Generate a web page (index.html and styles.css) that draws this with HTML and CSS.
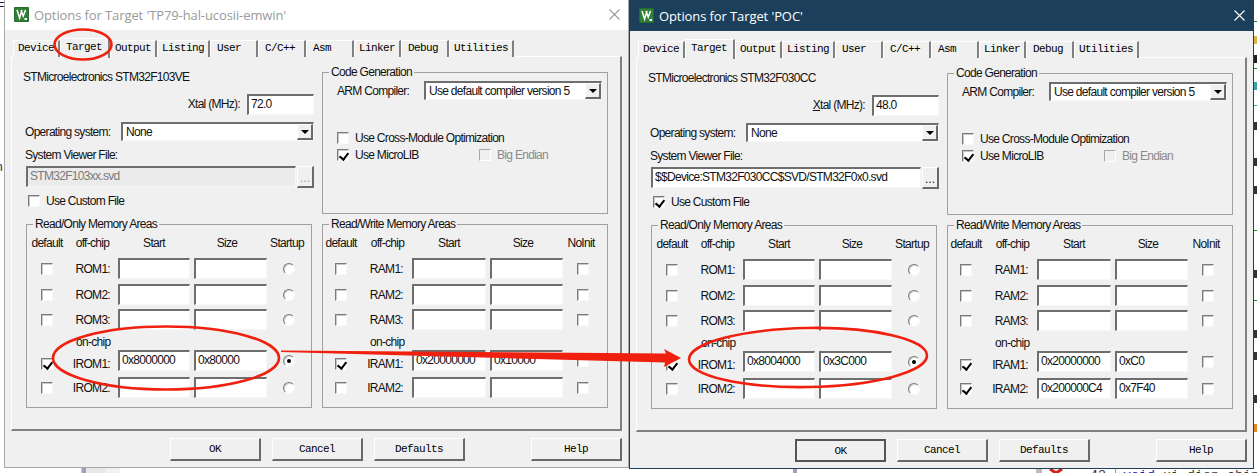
FILE: index.html
```html
<!DOCTYPE html>
<html lang="en">
<head>
<meta charset="utf-8">
<title>Options for Target</title>
<link rel="stylesheet" href="styles.css">
</head>
<body>
<div class="desktop">
  <span class="bg-f">F</span>
  <span class="bg-n">n</span>
  <svg class="bg-marks" width="1257" height="473" viewBox="0 0 1257 473">
    <rect x="81" y="467" width="1" height="6" fill="#c8c8c8"/>
    <rect x="82" y="467" width="4" height="6" fill="#a79cc0"/>
    <rect x="86" y="467" width="20" height="6" fill="#e8e8e8"/>
    <rect x="106" y="467" width="14" height="6" fill="#f2f2f2"/>
    <rect x="793" y="467" width="4" height="6" fill="#a79cc0"/>
    <rect x="1036" y="467" width="6" height="6" fill="#bdbdbd"/>
    <path d="M1050 469l6 4M1062 469l-6 4" stroke="#d8201a" stroke-width="3"/>
    <rect x="1115" y="467" width="1" height="6" fill="#999"/>
    <rect x="1254" y="21" width="3" height="1" fill="#1d8a2c"/>
    <rect x="1254" y="36" width="3" height="8" fill="#e3b04a"/>
    <rect x="1254" y="55" width="3" height="8" fill="#222"/>
    <rect x="1254" y="68" width="3" height="1" fill="#1d8a2c"/>
    <rect x="1254" y="82" width="3" height="8" fill="#3aa2a8"/>
    <rect x="1254" y="105" width="3" height="1" fill="#3aa2a8"/>
    <rect x="1254" y="122" width="3" height="8" fill="#333"/>
    <rect x="1254" y="158" width="3" height="8" fill="#333"/>
    <rect x="1254" y="186" width="3" height="8" fill="#333"/>
    <rect x="1254" y="230" width="3" height="1" fill="#1d8a2c"/>
    <rect x="1254" y="270" width="3" height="8" fill="#333"/>
    <rect x="1254" y="300" width="3" height="1" fill="#1d8a2c"/>
    <rect x="1254" y="330" width="3" height="8" fill="#333"/>
    <rect x="1254" y="352" width="3" height="8" fill="#333"/>
    <rect x="1254" y="395" width="3" height="8" fill="#333"/>
    <rect x="1254" y="424" width="3" height="8" fill="#e3862a"/>
  </svg>
  <span class="bg-lineno">43</span>
  <span class="bg-code"><b>void</b> ui_disp_chip</span>

  <section class="window window-inactive">
    <header class="titlebar">
      <svg class="app-icon" width="15" height="15" viewBox="0 0 15 15"><rect width="15" height="15" rx="1" fill="#256b2c"/><rect x="1" y="1" width="13" height="13" fill="#2f7f36"/><path d="M3 3l2.6 8L8 3M7 3l2.2 6L11.5 3" fill="none" stroke="#fff" stroke-width="1.5"/><path d="M10.5 11h2.5v2h-2.5z" fill="#fff"/></svg>
      <h1 class="title">Options for Target 'TP79-hal-ucosii-emwin'</h1>
      <svg class="close" width="11" height="11" viewBox="0 0 11 11"><path d="M.5.5l10 10M10.5.5l-10 10" fill="none" stroke="currentColor" stroke-width="1.1"/></svg>
    </header>
    <div class="dialog">
      <nav class="tabs">
        <span class="tab">Device</span><span class="tab tab-on">Target</span><span class="tab">Output</span><span class="tab">Listing</span><span class="tab">User</span><span class="tab">C/C++</span><span class="tab">Asm</span><span class="tab">Linker</span><span class="tab">Debug</span><span class="tab">Utilities</span>
      </nav>
      <div class="pane">
        <div class="col-device">
          <p class="device">STMicroelectronics STM32F103VE</p>
          <div class="xtal"><span>Xtal (MHz):</span><div class="field xtal-field">72.0</div></div>
          <div class="os"><span class="os-label">Operating system:</span><div class="field select">None<i class="arrow"></i></div></div>
          <p class="svf-label">System Viewer File:</p>
          <div class="svd"><div class="field svd-field field-off">STM32F103xx.svd</div><div class="dots dots-off">...</div></div>
          <label class="chk custom"><i class="cb"></i>Use Custom File</label>
        </div>
        <fieldset class="group codegen">
          <legend>Code Generation</legend>
          <div class="arm"><span class="arm-label">ARM Compiler:</span><div class="field select arm-select">Use default compiler version 5<i class="arrow"></i></div></div>
          <div class="chk opt-1"><i class="cb"></i>Use Cross-Module Optimization</div>
          <div class="opt-2"><div class="chk micro"><i class="cb on"></i>Use MicroLIB</div><div class="chk chk-off"><i class="cb"></i>Big Endian</div></div>
        </fieldset>
        <fieldset class="group mem-ro">
          <legend>Read/Only Memory Areas</legend>
          <div class="mem mem-grid-ro">
            <span class="hd">default</span><span class="hd">off-chip</span><span class="hd">Start</span><span class="hd hd-size">Size</span><span class="hd hd-last">Startup</span>
            <i class="cb"></i><span class="nm">ROM1:</span><div class="field"></div><div class="field"></div><i class="rd"></i>
            <i class="cb"></i><span class="nm">ROM2:</span><div class="field"></div><div class="field"></div><i class="rd"></i>
            <i class="cb"></i><span class="nm">ROM3:</span><div class="field"></div><div class="field"></div><i class="rd"></i>
            <span class="onchip">on-chip</span>
            <i class="cb on low"></i><span class="nm low">IROM1:</span><div class="field">0x8000000</div><div class="field">0x80000</div><i class="rd on"></i>
            <i class="cb"></i><span class="nm">IROM2:</span><div class="field"></div><div class="field"></div><i class="rd"></i>
          </div>
        </fieldset>
        <fieldset class="group mem-rw">
          <legend>Read/Write Memory Areas</legend>
          <div class="mem mem-grid-rw">
            <span class="hd">default</span><span class="hd hd-off">off-chip</span><span class="hd">Start</span><span class="hd hd-size">Size</span><span class="hd hd-last">NoInit</span>
            <i class="cb"></i><span class="nm">RAM1:</span><div class="field"></div><div class="field"></div><i class="cb"></i>
            <i class="cb"></i><span class="nm">RAM2:</span><div class="field"></div><div class="field"></div><i class="cb"></i>
            <i class="cb"></i><span class="nm">RAM3:</span><div class="field"></div><div class="field"></div><i class="cb"></i>
            <span class="onchip">on-chip</span>
            <i class="cb on low"></i><span class="nm low">IRAM1:</span><div class="field">0x20000000</div><div class="field">0x10000</div><i class="cb"></i>
            <i class="cb"></i><span class="nm">IRAM2:</span><div class="field"></div><div class="field"></div><i class="cb"></i>
          </div>
        </fieldset>
      </div>
      <footer class="buttons">
        <span class="btn">OK</span><span class="btn">Cancel</span><span class="btn">Defaults</span><span class="btn btn-help">Help</span>
      </footer>
    </div>
  </section>

  <section class="window window-active">
    <header class="titlebar">
      <svg class="app-icon" width="15" height="15" viewBox="0 0 15 15"><rect width="15" height="15" rx="1" fill="#256b2c"/><rect x="1" y="1" width="13" height="13" fill="#2f7f36"/><path d="M3 3l2.6 8L8 3M7 3l2.2 6L11.5 3" fill="none" stroke="#fff" stroke-width="1.5"/><path d="M10.5 11h2.5v2h-2.5z" fill="#fff"/></svg>
      <h1 class="title">Options for Target 'POC'</h1>
      <svg class="close" width="11" height="11" viewBox="0 0 11 11"><path d="M.5.5l10 10M10.5.5l-10 10" fill="none" stroke="currentColor" stroke-width="1.1"/></svg>
    </header>
    <div class="dialog">
      <nav class="tabs">
        <span class="tab">Device</span><span class="tab tab-on">Target</span><span class="tab">Output</span><span class="tab">Listing</span><span class="tab">User</span><span class="tab">C/C++</span><span class="tab">Asm</span><span class="tab">Linker</span><span class="tab">Debug</span><span class="tab">Utilities</span>
      </nav>
      <div class="pane">
        <div class="col-device">
          <p class="device">STMicroelectronics STM32F030CC</p>
          <div class="xtal"><span><u>X</u>tal (MHz):</span><div class="field xtal-field">48.0</div></div>
          <div class="os"><span class="os-label">Operating system:</span><div class="field select">None<i class="arrow"></i></div></div>
          <p class="svf-label">System Viewer File:</p>
          <div class="svd"><div class="field svd-field">$$Device:STM32F030CC$SVD/STM32F0x0.svd</div><div class="dots">...</div></div>
          <label class="chk custom"><i class="cb on"></i>Use Custom File</label>
        </div>
        <fieldset class="group codegen">
          <legend>Code Generation</legend>
          <div class="arm"><span class="arm-label">ARM Compiler:</span><div class="field select arm-select">Use default compiler version 5<i class="arrow"></i></div></div>
          <div class="chk opt-1"><i class="cb"></i>Use Cross-Module Optimization</div>
          <div class="opt-2"><div class="chk micro"><i class="cb on"></i>Use MicroLIB</div><div class="chk chk-off"><i class="cb"></i>Big Endian</div></div>
        </fieldset>
        <fieldset class="group mem-ro">
          <legend>Read/Only Memory Areas</legend>
          <div class="mem mem-grid-ro">
            <span class="hd">default</span><span class="hd">off-chip</span><span class="hd">Start</span><span class="hd hd-size">Size</span><span class="hd hd-last">Startup</span>
            <i class="cb"></i><span class="nm">ROM1:</span><div class="field"></div><div class="field"></div><i class="rd"></i>
            <i class="cb"></i><span class="nm">ROM2:</span><div class="field"></div><div class="field"></div><i class="rd"></i>
            <i class="cb"></i><span class="nm">ROM3:</span><div class="field"></div><div class="field"></div><i class="rd"></i>
            <span class="onchip">on-chip</span>
            <i class="cb on low"></i><span class="nm low">IROM1:</span><div class="field">0x8004000</div><div class="field">0x3C000</div><i class="rd on"></i>
            <i class="cb"></i><span class="nm">IROM2:</span><div class="field"></div><div class="field"></div><i class="rd"></i>
          </div>
        </fieldset>
        <fieldset class="group mem-rw">
          <legend>Read/Write Memory Areas</legend>
          <div class="mem mem-grid-rw">
            <span class="hd">default</span><span class="hd hd-off">off-chip</span><span class="hd">Start</span><span class="hd hd-size">Size</span><span class="hd hd-last">NoInit</span>
            <i class="cb"></i><span class="nm">RAM1:</span><div class="field"></div><div class="field"></div><i class="cb"></i>
            <i class="cb"></i><span class="nm">RAM2:</span><div class="field"></div><div class="field"></div><i class="cb"></i>
            <i class="cb"></i><span class="nm">RAM3:</span><div class="field"></div><div class="field"></div><i class="cb"></i>
            <span class="onchip">on-chip</span>
            <i class="cb on low"></i><span class="nm low">IRAM1:</span><div class="field">0x20000000</div><div class="field">0xC0</div><i class="cb"></i>
            <i class="cb on"></i><span class="nm">IRAM2:</span><div class="field">0x200000C4</div><div class="field">0x7F40</div><i class="cb"></i>
          </div>
        </fieldset>
      </div>
      <footer class="buttons">
        <span class="btn btn-default">OK</span><span class="btn">Cancel</span><span class="btn">Defaults</span><span class="btn btn-help">Help</span>
      </footer>
    </div>
  </section>

  <svg class="annotations" width="1257" height="473" viewBox="0 0 1257 473">
    <g fill="none" stroke="#f0200f" stroke-width="2.6">
      <ellipse cx="83" cy="44.5" rx="28.5" ry="15"/>
      <ellipse cx="166" cy="358" rx="113" ry="31.5"/>
      <ellipse cx="808" cy="357.5" rx="119" ry="29.5" transform="rotate(-1 808 357.5)"/>
    </g>
    <polygon points="281,350.5 666,353.5 664,349 681,358 664,367 665,362.5 281,352" fill="#f0200f"/>
  </svg>
</div>
</body>
</html>
```
FILE: styles.css
```css
* { box-sizing: border-box; }

html, body {
  margin: 0;
  padding: 0;
  background: #fff;
}

.desktop {
  position: relative;
  width: 1257px;
  height: 473px;
  overflow: hidden;
  background: #fff;
  font-family: "Liberation Sans", Arial, sans-serif;
  font-size: 12px;
  letter-spacing: -0.7px;
  color: #111;
}

.bg-f,
.bg-n {
  position: absolute;
  left: -3px;
  font-size: 12px;
  color: #1c1250;
}
.bg-f { top: 0; }
.bg-n { top: 160px; left: -4px; }

.bg-marks { position: absolute; left: 0; top: 0; }

.bg-lineno,
.bg-code {
  position: absolute;
  top: 468px;
  font-family: "Liberation Mono", monospace;
  font-size: 13.33px;
  letter-spacing: 0;
  color: #333;
}
.bg-lineno { left: 1090px; }
.bg-code { left: 1123px; white-space: nowrap; }
.bg-code b { font-weight: normal; color: #1414c8; }

/* Windows */
.window {
  position: absolute;
  width: 625px;
  height: 469px;
  background: #f0f0f0;
  border: 1px solid;
  border-top: 0;
}
.window-inactive { left: 4px; top: -1px; border-color: #a8a8a8; }
.window-active { left: 629px; top: 0; border-color: #1c3f5b; }

.titlebar {
  display: flex;
  align-items: center;
  height: 31px;
  padding: 0 8px 0 9px;
}
.window-inactive .titlebar { background: #fff; color: #9a9a9a; }
.window-active .titlebar { background: #1c3f5b; color: #fff; }

.app-icon { flex: none; }

.title {
  flex: 1;
  margin: 0 0 0 5px;
  font-family: "Open Sans", sans-serif;
  font-size: 13px;
  font-weight: 400;
  letter-spacing: -0.1px;
  white-space: nowrap;
}

.close { flex: none; }

/* Tabs */
.dialog { padding: 7px 0 0 6px; }

.tabs {
  position: relative;
  z-index: 1;
  display: flex;
  align-items: flex-end;
  height: 20px;
  margin-bottom: -1px;
  padding-left: 2px;
}

.tab {
  min-width: 47px;
  height: 17px;
  padding: 0 4px;
  background: #f0f0f0;
  border-top: 1px solid #fff;
  border-left: 1px solid #fff;
  border-right: 2px solid #808080;
  font-family: "Liberation Mono", monospace;
  font-size: 11px;
  letter-spacing: -0.6px;
  line-height: 14px;
  color: #000;
}

.tab:nth-child(5),
.tab:nth-child(6),
.tab:nth-child(7),
.tab:nth-child(9) {
  min-width: 48px;
  padding-left: 6px;
}

.tab-on {
  height: 20px;
  padding: 1px 6px 0 5px;
  margin-bottom: -1px;
}

/* Pane */
.pane {
  display: grid;
  grid-template-columns: 291px 286px;
  grid-template-rows: 149px auto;
  column-gap: 8px;
  row-gap: 3px;
  align-content: start;
  width: 611px;
  height: 375px;
  padding: 8px 0 0 11px;
  border: 1px solid;
  border-color: #fff #808080 #808080 #fff;
  border-right-width: 2px;
  border-bottom-width: 2px;
}

p { margin: 0; }

.device {
  margin-top: 5px;
  line-height: 14px;
}

.xtal {
  display: flex;
  align-items: center;
  justify-content: flex-end;
  gap: 7px;
  height: 22px;
  margin-top: 9px;
}
.xtal u { text-underline-offset: 1px; }

.xtal-field { width: 67px; height: 22px; }

.os {
  display: flex;
  align-items: center;
  height: 19px;
  margin: 7px 0 0 2px;
}
.os-label { flex: none; width: 96px; }
.os .select { flex: 1; }

.svf-label {
  margin: 7px 0 0 2px;
  line-height: 14px;
}

.svd {
  display: flex;
  gap: 1px;
  height: 22px;
  margin: 4px 0 0 3px;
}
.svd-field { flex: 1; }

.dots {
  width: 17px;
  padding-top: 4px;
  text-align: center;
  background: #f0f0f0;
  border: 1px solid;
  border-color: #fff #696969 #696969 #fff;
  border-right-width: 2px;
  border-bottom-width: 2px;
  line-height: 14px;
  letter-spacing: 0;
}
.dots-off { color: #9a9a9a; }

.custom { margin: 6px 0 0 5px; }

/* Form controls */
.field {
  height: 21px;
  padding: 0 1px 0 2px;
  background: #fff;
  border: 2px solid;
  border-color: #6e6e6e #f7f7f7 #f7f7f7 #6e6e6e;
  border-right-width: 1px;
  border-bottom-width: 1px;
  line-height: 16px;
  white-space: nowrap;
  overflow: hidden;
}

.field-off {
  background: #ebebeb;
  color: #7a7a7a;
}

.select {
  position: relative;
  height: 19px;
  padding-left: 3px;
  line-height: 16px;
}

.arrow {
  position: absolute;
  right: 0;
  top: 0;
  bottom: 0;
  width: 16px;
  background: #f0f0f0;
  border: 1px solid;
  border-color: #fff #696969 #696969 #fff;
  border-right-width: 2px;
  border-bottom-width: 2px;
}
.arrow::after {
  content: "";
  position: absolute;
  left: 3px;
  top: 5px;
  border: 4px solid transparent;
  border-top: 4px solid #000;
  border-bottom: 0;
}

.cb,
.rd {
  position: relative;
  display: block;
  flex: none;
  width: 12px;
  height: 12px;
  background: #fff;
  border: 1px solid;
  border-color: #7a7a7a #f8f8f8 #f8f8f8 #7a7a7a;
}
.cb { box-shadow: inset 1px 1px 0 #c8c8c8; }
.rd { border-radius: 50%; box-shadow: inset 1px 1px 0 #d4d4d4; }

.cb.on::after {
  content: "";
  position: absolute;
  left: 3px;
  top: 1px;
  width: 4px;
  height: 7px;
  border: solid #000;
  border-width: 0 2px 2px 0;
  transform: rotate(38deg);
}

.rd.on::after {
  content: "";
  position: absolute;
  left: 3px;
  top: 3px;
  width: 4px;
  height: 4px;
  border-radius: 50%;
  background: #000;
}

.chk {
  display: flex;
  align-items: center;
  gap: 6px;
  line-height: 14px;
}

.chk-off { color: #8a8a8a; }
.chk-off .cb {
  background: #f0f0f0;
  border-color: #a8a8a8 #fff #fff #a8a8a8;
  box-shadow: none;
}

/* Groups */
.group {
  min-width: 0;
  margin: 0;
  padding: 0;
  border: 1px solid #a0a0a0;
}
.group legend {
  margin-left: 6px;
  padding: 0 2px;
  line-height: 14px;
}

.arm {
  display: flex;
  align-items: center;
  height: 19px;
  margin: 2px 0 0 14px;
}
.arm-label { flex: none; width: 87px; }
.arm-select { width: 178px; }

.opt-1 { margin: 31px 0 0 14px; }

.opt-2 {
  display: flex;
  margin: 3px 0 0 14px;
}
.micro { width: 142px; }

/* Memory areas */
.mem-ro { width: 286px; margin-left: 3px; }
.mem-rw { width: 286px; }

.mem {
  display: grid;
  grid-template-rows: 27px 26px 25px 21px 20px 27px 21px;
  column-gap: 4px;
  justify-items: stretch;
  align-items: start;
  padding-bottom: 9px;
}
.mem-grid-ro { grid-template-columns: 40px 43px 72px 73px 36px; }
.mem-grid-rw { grid-template-columns: 36px 45px 74px 73px 32px; }

.hd {
  padding-top: 5px;
  line-height: 14px;
  text-align: center;
  white-space: nowrap;
  justify-self: center;
}
.hd-size { margin-right: 7px; }
.hd-last { margin-right: 4px; }
.hd-off { margin-left: 4px; }

.mem .cb,
.mem .rd {
  justify-self: center;
  margin-top: 5px;
}

.nm {
  line-height: 22px;
  padding-right: 4px;
  text-align: right;
  white-space: nowrap;
}
.mem-grid-rw .nm { padding-right: 5px; }

.mem .cb.low { margin-top: 8px; }
.nm.low { padding-top: 3px; }

.onchip {
  grid-column: 1 / -1;
  padding: 5px 0 0 49px;
  line-height: 14px;
}
.mem-grid-rw .onchip { padding-left: 47px; }

/* Buttons */
.buttons {
  display: flex;
  gap: 11px;
  width: 611px;
  justify-content: flex-end;
  margin-top: 7px;
}

.btn {
  width: 91px;
  height: 23px;
  text-align: center;
  background: #f0f0f0;
  border: 1px solid;
  border-color: #fff #696969 #696969 #fff;
  border-right-width: 2px;
  border-bottom-width: 2px;
  font-family: "Liberation Mono", monospace;
  font-size: 11px;
  letter-spacing: -0.6px;
  line-height: 21px;
  color: #000;
}

.btn-default {
  border: 2px solid #555;
  line-height: 20px;
}

.btn-help { margin-left: 55px; }

/* Annotations */
.annotations {
  position: absolute;
  z-index: 5;
  left: 0;
  top: 0;
  pointer-events: none;
}
```
